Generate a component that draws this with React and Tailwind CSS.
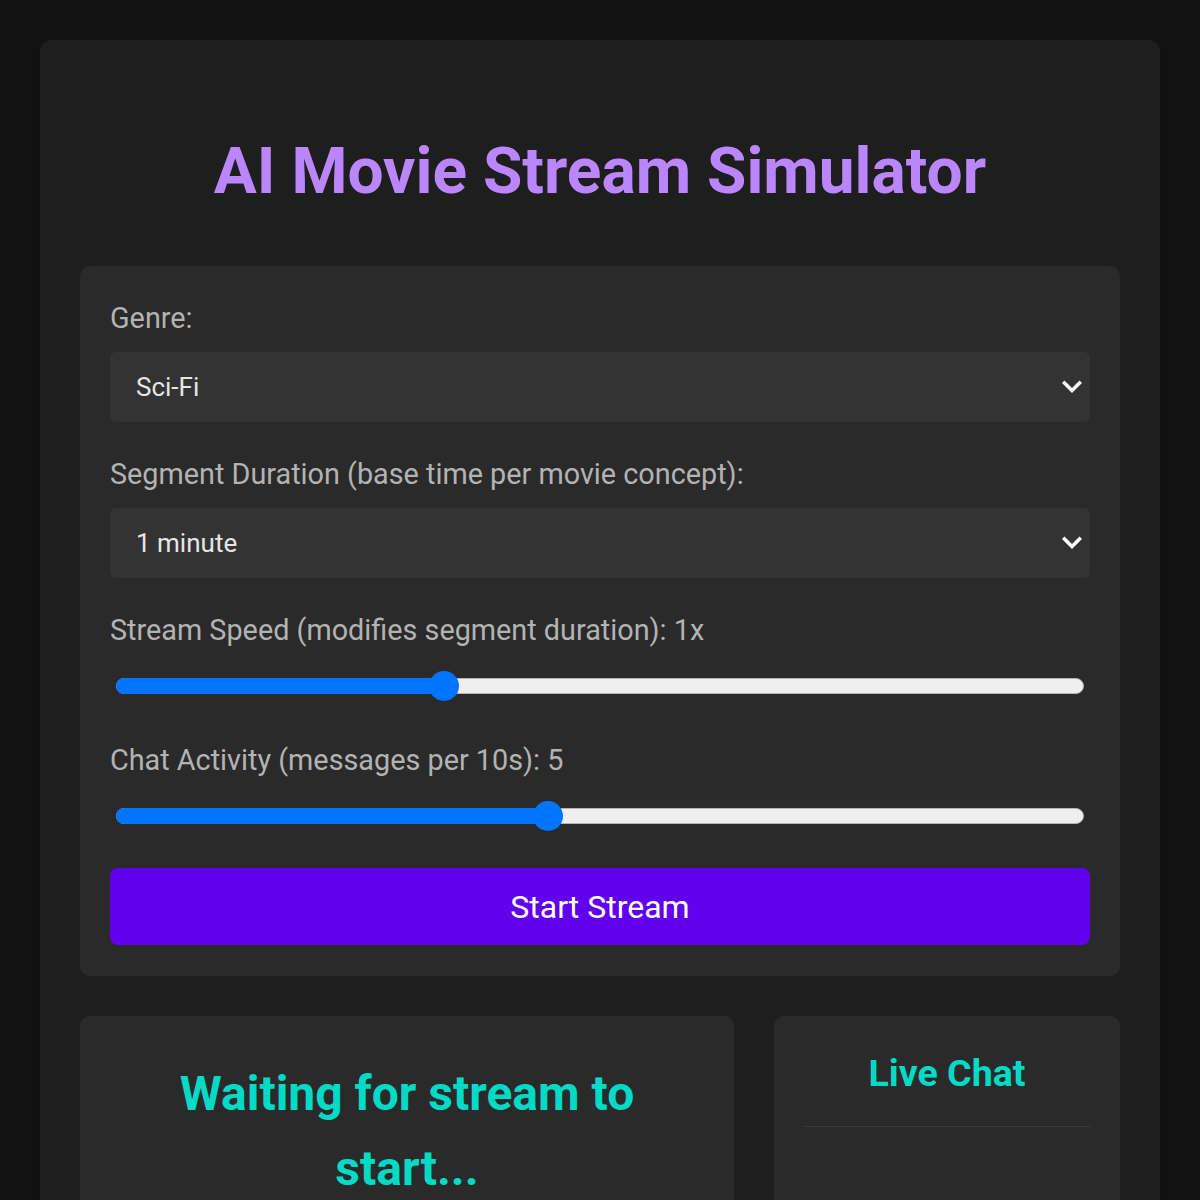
import React from 'react';

function Chevron() {
    return (
        <svg width="20" height="14" viewBox="0 0 20 14" fill="none" className="shrink-0">
            <path d="M2.5 3l7.5 7.5 7.5-7.5" stroke="#ffffff" strokeWidth="3.5" strokeLinecap="square" />
        </svg>
    );
}

function SelectBox({ value }) {
    return (
        <div className="mt-[14px] h-[70px] rounded-md bg-[#333333] flex items-center justify-between pl-[26px] pr-[8px] text-[26px] text-[#e6e6e6]">
            <span>{value}</span>
            <Chevron />
        </div>
    );
}

function Slider({ frac }) {
    // track 968 wide, thumb 30px
    const left = 15 + frac * 938;
    return (
        <div className="relative mx-[6px] h-[30px] flex items-center">
            <div className="h-[16px] w-full rounded-full bg-[#efefef] border border-[#b3b3b3]" />
            <div
                className="absolute top-[7px] left-0 h-[16px] rounded-full bg-[#0075ff]"
                style={{ width: left + 'px' }}
            />
            <div
                className="absolute top-0 h-[30px] w-[30px] rounded-full bg-[#0075ff]"
                style={{ left: left - 15 + 'px' }}
            />
        </div>
    );
}

export default function App() {
    return (
        <div className="min-h-screen bg-[#121212] p-[40px] font-['Roboto',sans-serif]">
            <div className="rounded-xl bg-[#1e1e1e] px-[40px] pt-[93px] pb-[40px] shadow-lg">
                <h1 className="text-center text-[64px] leading-[77px] font-bold text-[#bb86fc]">
                    AI Movie Stream Simulator
                </h1>

                <div className="mt-[56px] rounded-[10px] bg-[#2a2a2a] px-[30px] pt-[32px] pb-[31px]">
                    <label className="block text-[28.8px] leading-[40px] text-[#b3b3b3]">Genre:</label>
                    <SelectBox value="Sci-Fi" />

                    <label className="mt-[32px] block text-[28.8px] leading-[40px] text-[#b3b3b3]">
                        Segment Duration (base time per movie concept):
                    </label>
                    <SelectBox value="1 minute" />

                    <label className="mt-[32px] block text-[28.8px] leading-[40px] text-[#b3b3b3]">
                        Stream Speed (modifies segment duration): 1x
                    </label>
                    <div className="mt-[21px]">
                        <Slider frac={1 / 3} />
                    </div>

                    <label className="mt-[39px] block text-[28.8px] leading-[40px] text-[#b3b3b3]">
                        Chat Activity (messages per 10s): 5
                    </label>
                    <div className="mt-[21px]">
                        <Slider frac={4 / 9} />
                    </div>

                    <button className="mt-[37px] h-[77px] w-full rounded-lg bg-[#6200ee] text-[32px] text-white">
                        Start Stream
                    </button>
                </div>

                <div className="mt-[40px] grid grid-cols-[654px_1fr] gap-[40px] items-start">
                    <div className="rounded-[10px] bg-[#2a2a2a] px-[30px] pt-[40px] pb-[40px] min-h-[300px]">
                        <h2 className="text-center text-[48px] leading-[75px] font-bold text-[#03dac6]">
                            Waiting for stream to start...
                        </h2>
                    </div>
                    <div className="rounded-[10px] bg-[#2a2a2a] px-[30px] pt-[34px] pb-[30px] min-h-[300px]">
                        <h3 className="text-center text-[37.5px] leading-[46px] font-bold text-[#03dac6] pb-[30px] border-b border-[#3a3a3a]">
                            Live Chat
                        </h3>
                    </div>
                </div>
            </div>
        </div>
    );
}
